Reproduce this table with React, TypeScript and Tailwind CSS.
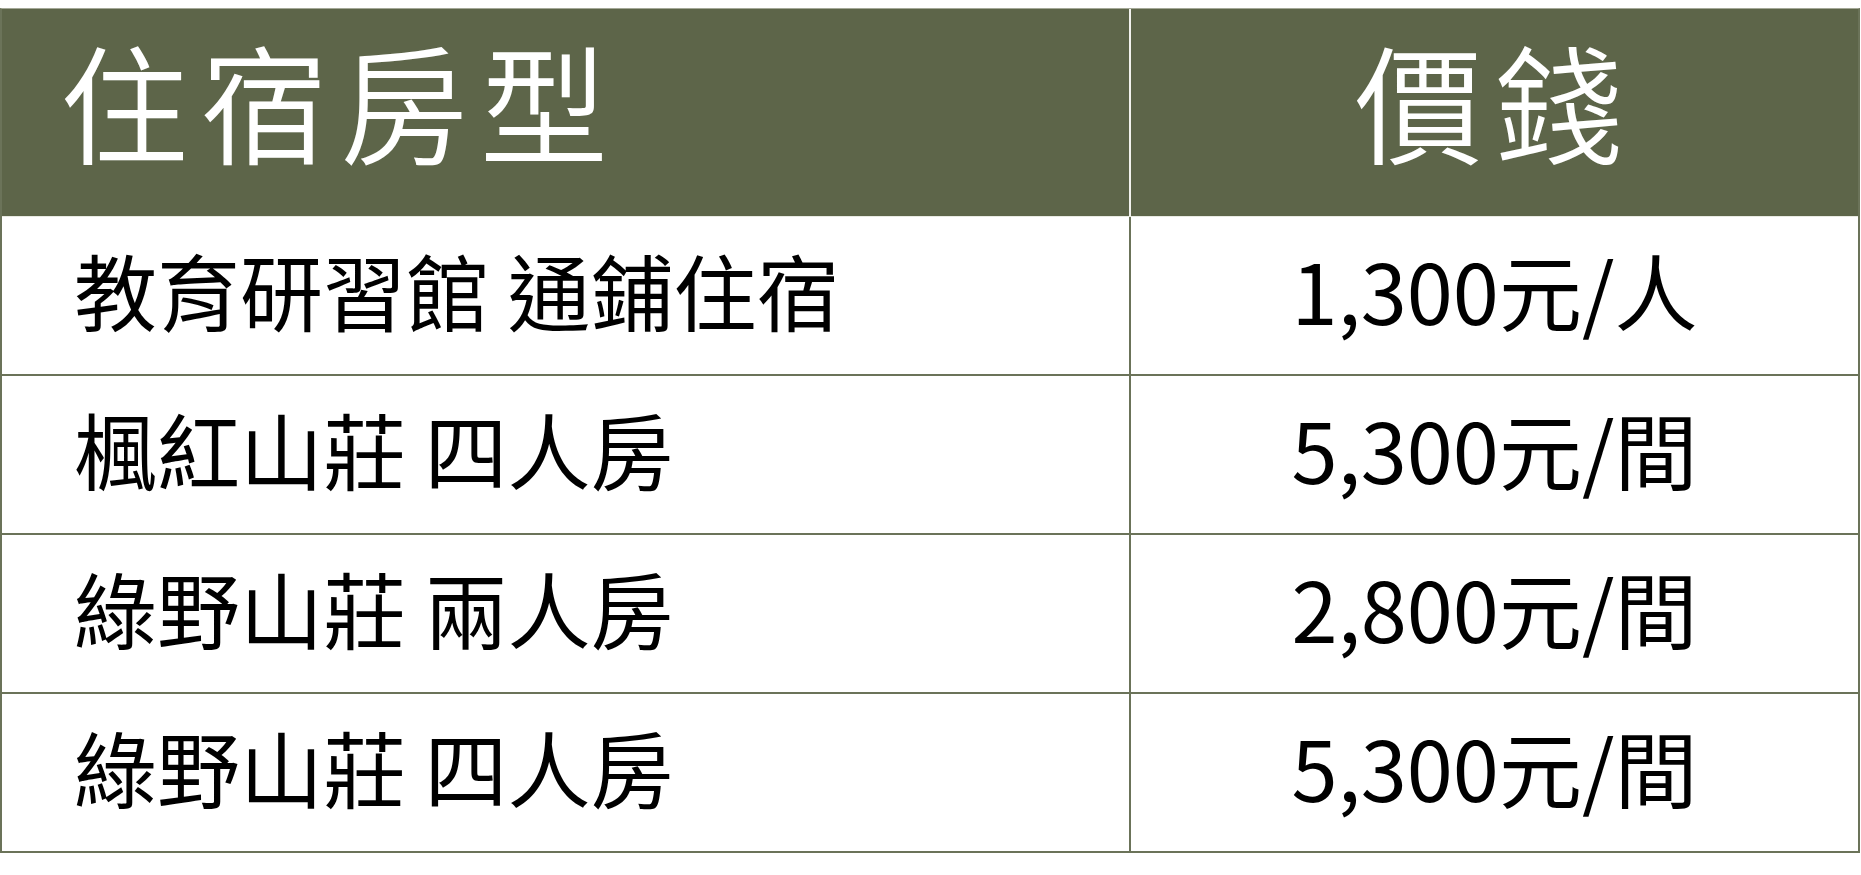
import React from "react";

const rows: [string, string][] = [
  ["教育研習館 通鋪住宿", "1,300元/人"],
  ["楓紅山莊 四人房", "5,300元/間"],
  ["綠野山莊 兩人房", "2,800元/間"],
  ["綠野山莊 四人房", "5,300元/間"],
];

export default function App() {
  return (
    <div className="w-[1861px] h-[875px] bg-white pt-[8px] font-['Noto_Sans_CJK_TC','Noto_Sans_CJK_SC',sans-serif]">
      <div className="w-[1860px] border-t border-t-[#a4a897] border-l-2 border-r-2 border-b-2 border-[#6b7359]">
        <div className="flex h-[208px] bg-[#5d6549] border-b border-b-[#e8eae2]">
          <div className="w-[1129px] border-r-2 border-r-[#f2f2ee] flex items-center pl-[58px] pb-[26px]">
            <span className="text-white text-[128px] font-[350] leading-none tracking-[12px]">住宿房型</span>
          </div>
          <div className="flex-1 flex items-center justify-center pb-[26px]">
            <span className="text-white text-[128px] font-[350] leading-none tracking-[12px]">價錢</span>
          </div>
        </div>
        {rows.map(([name, price], i) => (
          <div
            key={i}
            className={
              i < rows.length - 1
                ? "flex h-[159px] border-b-2 border-b-[#6b7359]"
                : "flex h-[157px]"
            }
          >
            <div className="w-[1129px] border-r-2 border-r-[#6b7359] flex items-center pl-[72px] pb-[12px]">
              <span className="text-black text-[83px] leading-none">{name}</span>
            </div>
            <div className="flex-1 flex items-center justify-center pb-[12px]">
              <span className="text-black text-[83px] leading-none">{price}</span>
            </div>
          </div>
        ))}
      </div>
    </div>
  );
}
